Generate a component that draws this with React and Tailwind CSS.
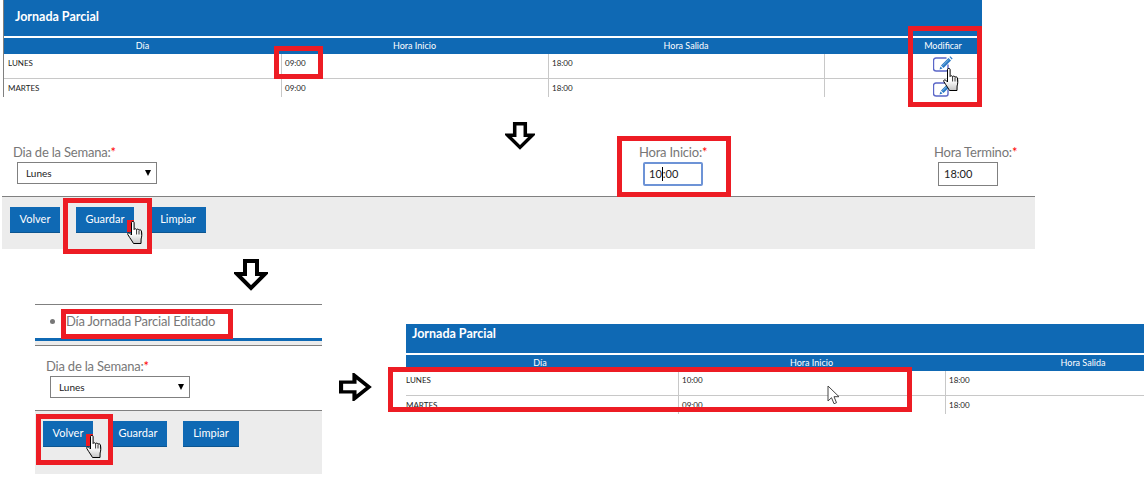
import React from 'react';

function Hand({ className }) {
  return (
    <svg className={className} width="17" height="24" viewBox="0 0 17 24">
      <defs>
        <linearGradient id="handFill" x1="0" y1="0" x2="0" y2="1">
          <stop offset="0.55" stopColor="#fff" />
          <stop offset="1" stopColor="#c4c4c4" />
        </linearGradient>
      </defs>
      <path
        d="M4.5 1.5c0-1.4 2.6-1.4 2.6 0v7c.5-1 2.2-1 2.5.2.6-.9 2.2-.7 2.4.5.7-.7 2.2-.4 2.4.8.6 3 .5 5.5-.3 8L14 22.5H6.5L5 20C3.5 17.5 1.8 15.5.8 13.5c-.6-1.3 1-2.3 2-1.3l1.7 1.8z"
        fill="url(#handFill)"
        stroke="#000"
        strokeWidth="1"
        strokeLinejoin="round"
      />
      <path d="M9.6 9v4.5M12 9.5v4M14.4 10.5v3" stroke="#000" strokeWidth="0.8" fill="none" />
    </svg>
  );
}

function Pencil() {
  return (
    <svg width="20" height="17" viewBox="0 0 20 17">
      <path d="M13.5 2H3a2.5 2.5 0 0 0-2.5 2.5v8A2.5 2.5 0 0 0 3 15h10a2 2 0 0 0 2-2V8.5" fill="#fff" stroke="#5a66c8" strokeWidth="1.4" />
      <path d="M8 9.5 15.5 2l2.5 2.5L10.5 12z" fill="#2a78c4" />
      <path d="M7.5 10.5l2 2-3 1z" fill="#2a78c4" />
      <path d="M16.5 1l.8-.7 2.3 2.3-.8.8z" fill="#2a78c4" />
      <path d="M9.5 9.8 15.8 3.5" stroke="#bfe0f5" strokeWidth="0.6" />
    </svg>
  );
}

function DownArrow({ className, width, height }) {
  return (
    <svg className={className} width={width} height={height} viewBox="0 0 34 32" preserveAspectRatio="none">
      <path d="M11 2h12v13h8L17 29 3 15h8z" fill="#fff" stroke="#000" strokeWidth="4" />
    </svg>
  );
}

function RedBox({ className }) {
  return <div className={`absolute border-[5px] border-[#ed1c24] ${className}`} />;
}

function SiteTable({ className, titleClass, firstCell, cols, rows, children }) {
  return (
    <div className={`relative ${className}`}>
      <div className={`bg-[#0f69b4] text-[12.5px] font-bold text-white ${titleClass}`}>Jornada Parcial</div>
      <div className="mt-[2px] flex h-[16px] items-center bg-[#0f69b4] text-[9px] text-white">
        {cols.map((c, j) => (
          <div key={j} className={`shrink-0 text-center ${c.headClass || ''}`} style={{ width: c.w }}>{c.name}</div>
        ))}
      </div>
      {rows.map((r, i) => (
        <div key={i} className={`flex overflow-hidden text-[8px] text-[#222] ${i === 0 ? 'h-[25px] border-b border-[#c8c8c8]' : 'h-[18px]'}`}>
          {cols.map((c, j) => (
            <div
              key={j}
              className={`shrink-0 ${c.icon ? 'flex justify-center pt-[2px]' : 'pt-[3px]'} ${j === 0 ? firstCell : ''} ${j > 0 && !c.icon ? 'border-l border-[#c8c8c8] pl-[3px]' : ''}`}
              style={{ width: c.w }}
            >
              {r[j]}
            </div>
          ))}
        </div>
      ))}
      {children}
    </div>
  );
}

function Field({ label, className, children }) {
  return (
    <div className={className}>
      <div className="text-[13px] leading-[18px] tracking-[-0.2px] text-[#777]">
        {label}<span className="text-[#f00]">*</span>
      </div>
      <div className="ml-[4px] mt-[1px]">{children}</div>
    </div>
  );
}

function DaySelect() {
  return (
    <div className="flex h-[22px] w-[140px] items-center justify-between border border-[#808080] bg-white pl-[8px] pr-[5px] text-[10px] text-[#222]">
      Lunes
      <span className="h-0 w-0 border-x-[3.5px] border-t-[6px] border-x-transparent border-t-black" />
    </div>
  );
}

function Btn({ children, className, pressed }) {
  return (
    <div className={`relative flex h-[26px] items-center justify-center border-b border-[#0c5590] bg-[#0f69b4] text-[11px] text-white ${className}`}>
      {children}
      {pressed && <div className="absolute bottom-0 right-0 h-[12px] w-[7px] bg-[#ed1c24]" />}
      {pressed && <Hand className="absolute -right-[10px] top-[14px]" />}
    </div>
  );
}

function ButtonBar({ className, active }) {
  return (
    <div className={`flex gap-[16px] border-t border-[#808080] bg-[#ececec] pt-[10px] ${className}`}>
      <Btn className="w-[50px]" pressed={active === 'Volver'}>Volver</Btn>
      <Btn className="w-[58px]" pressed={active === 'Guardar'}>Guardar</Btn>
      <Btn className="w-[56px]">Limpiar</Btn>
    </div>
  );
}

export default function App() {
  return (
    <div className="h-[504px] w-[1144px] overflow-hidden bg-white font-['Lato',sans-serif]">
      {/* Top table */}
      <SiteTable
        className="ml-[3px] w-[979px] border-l border-[#808080]"
        titleClass="h-[36px] pl-[11px] pt-[8px]"
        firstCell="pl-[4px]"
        cols={[
          { name: 'Día', w: 277 },
          { name: 'Hora Inicio', w: 267 },
          { name: 'Hora Salida', w: 276 },
          { name: '', w: 80 },
          { name: 'Modificar', w: 78, icon: true },
        ]}
        rows={[
          ['LUNES', '09:00', '18:00', '', <Pencil />],
          ['MARTES', '09:00', '18:00', '', <Pencil />],
        ]}
      >
        <Hand className="absolute left-[939px] top-[68px]" />
        <RedBox className="left-[904px] top-[26px] h-[81px] w-[74px]" />
        <RedBox className="left-[270px] top-[46px] h-[33px] w-[49px]" />
      </SiteTable>

      {/* First form */}
      <div className="relative ml-[2px] mt-[25px] w-[1033px]">
        <div className="grid h-[74px] grid-cols-[492px_134px_295px_1fr] pl-[11px]">
          <Field label="Dia de la Semana:" className="mt-[21px]"><DaySelect /></Field>
          <DownArrow width={30} height={28} />
          <Field label="Hora Inicio:" className="mt-[21px]">
            <div className="flex h-[24px] w-[60px] items-center rounded-[2px] border-2 border-[#6d93d6] pl-[4px] text-[11px] text-[#222]">
              10<span className="h-[14px] w-px bg-black" />:00
            </div>
          </Field>
          <Field label="Hora Termino:" className="mt-[21px]">
            <div className="flex h-[24px] w-[60px] items-center border border-[#808080] pl-[5px] text-[11px] text-[#222]">18:00</div>
          </Field>
        </div>
        <ButtonBar className="h-[53px] pl-[8px]" active="Guardar" />
        <RedBox className="left-[61px] top-[76px] h-[56px] w-[89px]" />
        <RedBox className="left-[615px] top-[14px] h-[61px] w-[114px]" />
      </div>

      <DownArrow className="ml-[234px] mt-[10px]" width={34} height={32} />

      <div className="mt-[13px] flex items-start pl-[35px]">
        {/* Second form */}
        <div className="relative w-[287px] shrink-0">
          <div className="flex h-[34px] items-center border-t border-[#808080] pl-[15px] text-[13px] tracking-[-0.2px] text-[#777]">
            <span className="mr-[11px] h-[5px] w-[5px] rounded-full bg-[#777]" />
            Día Jornada Parcial Editado
          </div>
          <div className="h-[3px] bg-[#0f69b4]" />
          <div className="h-[5px] border-b border-[#808080] bg-[#ececec]" />
          <div className="h-[64px] pl-[11px] pt-[11px]">
            <Field label="Dia de la Semana:"><DaySelect /></Field>
          </div>
          <ButtonBar className="h-[64px] pl-[8px]" active="Volver" />
          <RedBox className="left-[1px] top-[110px] h-[51px] w-[77px]" />
          <RedBox className="left-[26px] top-[5px] h-[30px] w-[172px]" />
        </div>

        <svg className="ml-[17px] mt-[69px] shrink-0" width="33" height="28" viewBox="0 0 32 34" preserveAspectRatio="none">
          <path d="M2 11v12h13v8l14-14L15 3v8z" fill="#fff" stroke="#000" strokeWidth="4" />
        </svg>

        {/* Result table */}
        <SiteTable
          className="ml-[34px] mt-[20px] w-[738px] shrink-0"
          titleClass="h-[29px] pl-[6px] pt-[1px]"
          firstCell=""
          cols={[
            { name: 'Día', w: 272, headClass: 'pr-[4px]' },
            { name: 'Hora Inicio', w: 267 },
            { name: 'Hora Salida', w: 276 },
          ]}
          rows={[
            ['LUNES', '10:00', '18:00'],
            ['MARTES', '09:00', '18:00'],
          ]}
        >
          <svg className="absolute left-[421px] top-[61px]" width="13" height="20" viewBox="0 0 13 20">
            <path d="M1 1v15l3.5-3.3 2.5 6 2.5-1-2.5-6h5z" fill="#fff" stroke="#444" strokeWidth="1" />
          </svg>
          <RedBox className="-left-[18px] top-[43px] h-[45px] w-[524px]" />
        </SiteTable>
      </div>
    </div>
  );
}
